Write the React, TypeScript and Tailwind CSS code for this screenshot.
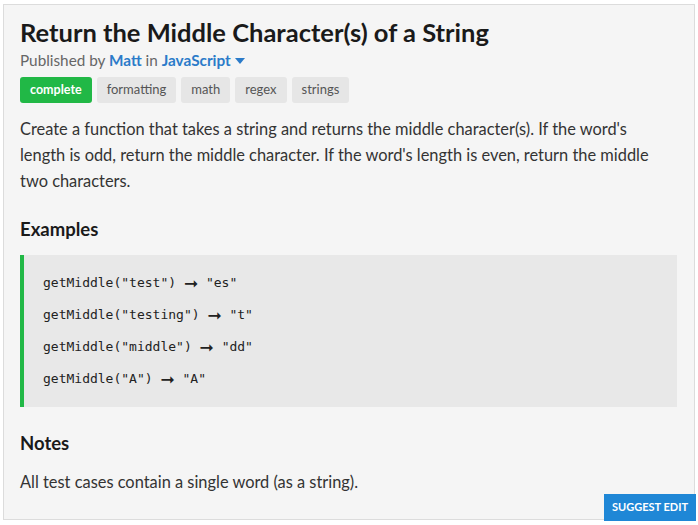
import React from "react";

const tags = ["formatting", "math", "regex", "strings"];
const examples: [string, string][] = [
  ['getMiddle("test")', '"es"'],
  ['getMiddle("testing")', '"t"'],
  ['getMiddle("middle")', '"dd"'],
  ['getMiddle("A")', '"A"'],
];

export default function App() {
  return (
    <div className="w-[698px] h-[525px] bg-white pt-[4px] pl-[3px]" style={{ fontFamily: "Lato, 'Open Sans', sans-serif" }}>
      <div className="relative w-[692px] h-[516px] bg-[#f5f5f5] border border-[#dcdcdc] pl-[16px] pr-[17px] pt-[10px]">
        <h1 className="text-[25.5px] leading-[34px] font-bold text-[#1a1a1a]">Return the Middle Character(s) of a String</h1>
        <div className="text-[15.3px] leading-[22px] text-[#666] flex items-center">
          <span>Published by&nbsp;</span>
          <span className="text-[#2b7bc9] font-bold">Matt</span>
          <span>&nbsp;in&nbsp;</span>
          <span className="text-[#2b7bc9] font-bold">JavaScript</span>
          <svg width="10" height="6" viewBox="0 0 10 6" className="ml-[4px] mt-[1px]">
            <path d="M0 0 L10 0 L5 6 Z" fill="#2b7bc9" />
          </svg>
        </div>
        <div className="flex gap-[5px] mt-[6px]">
          <span className="h-[26px] px-[10px] rounded-[3px] bg-[#21b846] text-white text-[12.5px] font-bold flex items-center">complete</span>
          {tags.map((t) => (
            <span key={t} className="h-[26px] px-[10px] rounded-[3px] bg-[#e6e6e6] text-[#555] text-[13px] flex items-center">{t}</span>
          ))}
        </div>
        <p className="mt-[13px] pr-[14px] text-[16.4px] leading-[26px] text-[#333]">
          Create a function that takes a string and returns the middle character(s). If the word's length is odd, return the middle character. If the word's length is even, return the middle two characters.
        </p>
        <h2 className="mt-[22px] text-[18.5px] leading-[26px] font-bold text-[#1a1a1a]">Examples</h2>
        <div className="mt-[13px] bg-[#e8e8e8] border-l-[4px] border-[#21b846] h-[152px] pl-[19px] pt-[18px] flex flex-col gap-[12px]">
          {examples.map(([a, b]) => (
            <div key={a} className="text-[13px] leading-[20px] text-[#222] flex items-center" style={{ fontFamily: "'DejaVu Sans Mono', monospace" }}>
              <span>{a}&nbsp;</span>
              <span className="text-[17px] leading-[20px]" style={{ fontFamily: "'DejaVu Sans', sans-serif" }}>➞</span>
              <span>&nbsp;{b}</span>
            </div>
          ))}
        </div>
        <h2 className="mt-[23px] text-[18.5px] leading-[26px] font-bold text-[#1a1a1a]">Notes</h2>
        <p className="mt-[13px] text-[16.4px] leading-[26px] text-[#333]">All test cases contain a single word (as a string).</p>
        <button className="absolute right-[-2px] bottom-[-2px] w-[92px] h-[27px] bg-[#1f87d6] text-white text-[11px] font-bold uppercase">Suggest Edit</button>
      </div>
    </div>
  );
}
